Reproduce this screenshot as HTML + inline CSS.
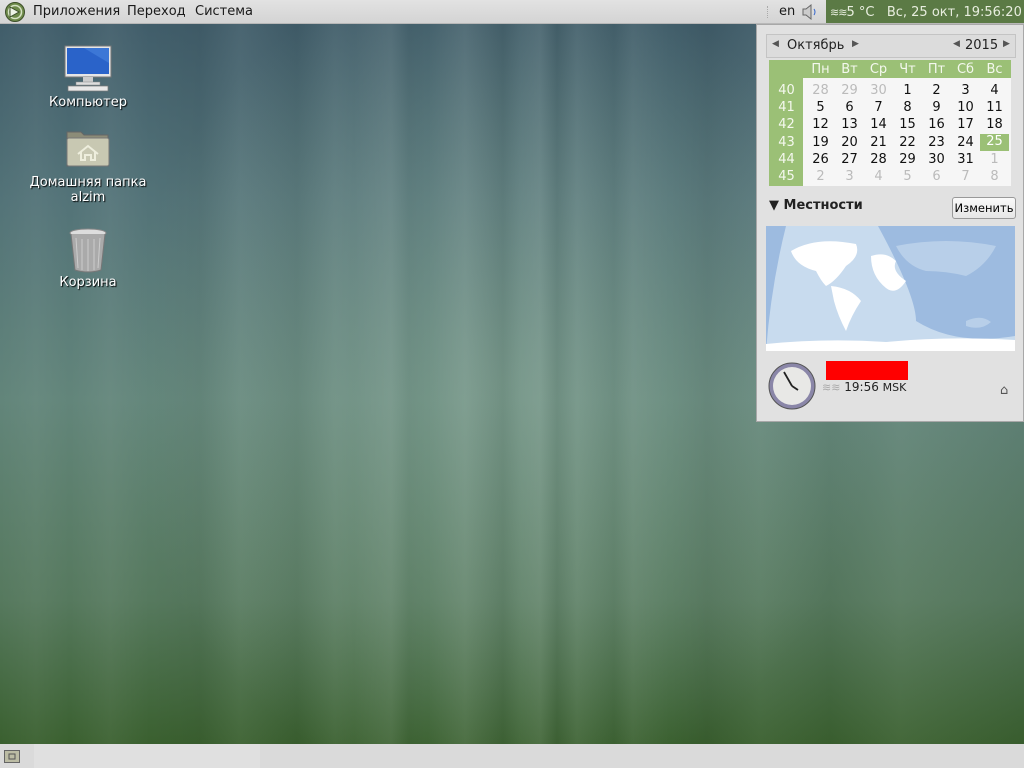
<!DOCTYPE html>
<html><head><meta charset="utf-8"><style>
*{margin:0;padding:0;box-sizing:border-box}
body{width:1024px;height:768px;overflow:hidden;position:relative;font-family:"DejaVu Sans","Liberation Sans",sans-serif;font-size:13px}
#bg{position:absolute;left:0;top:0;width:1024px;height:768px;
background:
linear-gradient(90deg,rgba(255,255,255,0) 0,rgba(255,255,255,.04) 36px,rgba(0,0,0,0) 70px,rgba(255,255,255,.05) 110px,rgba(255,255,255,0) 150px,rgba(0,0,0,.04) 200px,rgba(255,255,255,.05) 240px,rgba(0,0,0,.04) 297px,rgba(255,255,255,.05) 335px,rgba(255,255,255,.03) 354px,rgba(255,255,255,.08) 391px,rgba(0,0,0,.02) 409px,rgba(255,255,255,0) 428px,rgba(255,255,255,.08) 465px,rgba(0,0,0,.05) 503px,rgba(255,255,255,.04) 521px,rgba(255,255,255,.08) 540px,rgba(0,0,0,.05) 557px,rgba(255,255,255,.06) 577px,rgba(0,0,0,.03) 614px,rgba(255,255,255,.05) 633px,rgba(255,255,255,0) 670px,rgba(0,0,0,.05) 707px,rgba(255,255,255,.04) 760px,rgba(0,0,0,.03) 830px,rgba(255,255,255,.05) 900px,rgba(0,0,0,.04) 1024px),
radial-gradient(ellipse 380px 420px at 500px 380px,rgba(150,180,160,.4),rgba(150,180,160,0)),
linear-gradient(180deg,#3e5a68 0,#537378 200px,#62857a 400px,#56795e 600px,#3a602f 744px)}
#top{position:absolute;left:0;top:0;width:1024px;height:24px;background:linear-gradient(#e2e2e2,#d4d4d4);border-bottom:1px solid #b8b8b8}
#top .m{position:absolute;top:4px;color:#1a1a1a;font-size:13px}
#clk{position:absolute;left:826px;top:0;width:198px;height:23px;background:#5b7a45;color:#e8eedf;font-size:13px;padding:4px 0 0 4px;white-space:nowrap}
#bot{position:absolute;left:0;top:744px;width:1024px;height:24px;background:#dadada}
.ico{position:absolute;text-align:center;color:#fff;font-size:13px;text-shadow:1px 1px 1px #000;width:120px;line-height:15px}
#pop{position:absolute;left:756px;top:24px;width:268px;height:398px;background:#e1e1e1;border:1px solid #a8a8a8}
#calhdr{position:absolute;left:9px;top:9px;width:250px;height:24px;border:1px solid #c4c4c4;background:#dcdcdc;font-size:13px;color:#222}
#cal{position:absolute;left:12px;top:35px;width:242px;height:126px;background:#f6f6f6}
#cal div{position:absolute;text-align:center;width:29px;font-size:13px}
.wk{background:#9bc076;}
#map{position:absolute;left:9px;top:201px;width:249px;height:125px;background:#c8dbee;overflow:hidden}
</style></head><body>
<div id="bg"></div>
<div id="top">
<svg style="position:absolute;left:4px;top:1px" width="22" height="22" viewBox="0 0 22 22"><circle cx="11" cy="11" r="9.5" fill="#6e8a4a" stroke="#3d4f2a"/><circle cx="11" cy="11" r="6.5" fill="none" stroke="#d6e2c4" stroke-width="1.5"/><path d="M6 6 L15 11 L6 16Z" fill="#eef3e6" stroke="#3d4f2a"/></svg>
<span class="m" style="left:33px">Приложения</span><span class="m" style="left:127px">Переход</span><span class="m" style="left:195px">Система</span>
<span style="position:absolute;left:767px;top:6px;width:2px;height:12px;border-left:1px dotted #aaa"></span>
<span class="m" style="left:779px">en</span>
<svg style="position:absolute;left:801px;top:4px" width="18" height="16" viewBox="0 0 18 16"><path d="M2 5h3l5-4v14l-5-4H2z" fill="#ccc" stroke="#666"/><path d="M13 5q2 3 0 6" fill="none" stroke="#36c"/></svg>
</div>
<div id="clk" style="padding-top:5px"><span style="font-size:11px;letter-spacing:-1px">≋≋</span>5 °C &nbsp; Вс, 25 окт, 19:56:20</div>

<div class="ico" style="left:28px;top:95px">Компьютер</div>
<svg style="position:absolute;left:64px;top:45px" width="48" height="48" viewBox="0 0 48 48"><rect x="1" y="1" width="46" height="31" fill="#e6e6e6" stroke="#777"/><rect x="3" y="3" width="42" height="26" fill="#2a63c9"/><path d="M20 3 L45 3 L45 18Z" fill="#4a86e0" opacity=".6"/><rect x="19" y="32" width="10" height="5" fill="#ccc"/><rect x="12" y="37" width="24" height="3" fill="#ddd" stroke="#888" stroke-width=".5"/><rect x="4" y="41" width="40" height="5" fill="#e8e8e8" stroke="#777" stroke-width=".7"/></svg>
<div class="ico" style="left:28px;top:175px">Домашняя папка<br>alzim</div>
<svg style="position:absolute;left:66px;top:128px" width="44" height="40" viewBox="0 0 44 40"><path d="M1 4h14l3 3h24v31H1z" fill="#8c8c78" stroke="#666"/><rect x="1" y="10" width="42" height="28" rx="2" fill="#c8c8b2" stroke="#777"/><path d="M12 26 L22 18 L32 26 M15 24v8h4v-5h6v5h4v-8" fill="none" stroke="#eeeedd" stroke-width="2"/></svg>
<div class="ico" style="left:28px;top:275px">Корзина</div>
<svg style="position:absolute;left:68px;top:228px" width="40" height="46" viewBox="0 0 40 46"><ellipse cx="20" cy="5" rx="18" ry="4" fill="#ddd" stroke="#888"/><path d="M3 6 L7 42 Q20 46 33 42 L37 6" fill="#aaa" stroke="#777"/><path d="M8 10 L10 40 M14 11v31 M20 11v32 M26 11v31 M32 10 L30 40" stroke="#ccc"/></svg>

<div id="pop">
<div id="calhdr"><span style="position:absolute;left:5px;top:4px;font-size:9px;color:#555">◀</span><span style="position:absolute;left:20px;top:3px">Октябрь</span><span style="position:absolute;left:85px;top:4px;font-size:9px;color:#555">▶</span><span style="position:absolute;left:186px;top:4px;font-size:9px;color:#555">◀</span><span style="position:absolute;left:198px;top:3px">2015</span><span style="position:absolute;left:236px;top:4px;font-size:9px;color:#555">▶</span></div>
<div id="cal">
<div class="wk" style="left:0;top:0;width:242px;height:18px"></div>
<div class="wk" style="left:0;top:0;width:34px;height:126px"></div>
</div>
<div id="map"><svg width="249" height="125" viewBox="0 0 249 125"><path d="M20 0 Q5 60 0 125 L0 0Z M112 0 Q150 70 150 95 Q190 120 249 110 L249 0Z" fill="#9dbbe0"/><path d="M25 25 Q50 10 90 18 Q95 30 80 40 Q70 55 60 60 Q55 55 50 45 Q30 40 25 25Z M65 60 Q85 62 95 75 Q85 90 80 105 Q72 90 68 75Z M105 30 Q120 25 130 35 Q125 45 140 55 Q130 70 120 62 Q105 50 105 30Z M0 118 Q60 112 120 116 Q180 110 249 114 L249 125 L0 125Z" fill="#fff"/><path d="M130 20 Q180 10 230 20 Q220 40 200 50 Q180 45 160 45 Q140 40 130 20Z M200 95 Q215 88 225 96 Q215 105 200 100Z" fill="#b8cfe9"/></svg></div>
<div style="position:absolute;left:12px;top:173px;font-weight:bold;font-size:13px;color:#222">▼ Местности</div>
<div style="position:absolute;left:195px;top:172px;width:64px;height:22px;border:1px solid #999;border-radius:3px;background:linear-gradient(#fafafa,#e6e6e6);font-size:11.5px;text-align:center;line-height:20px">Изменить</div>
<svg style="position:absolute;left:10px;top:336px" width="50" height="50" viewBox="0 0 50 50"><circle cx="25" cy="25" r="23" fill="#8a86a8" stroke="#555"/><circle cx="25" cy="25" r="19" fill="#e8e8e6"/><path d="M25 25 L17 11 M25 25 L31 29" stroke="#222" stroke-width="1.8"/></svg>
<div style="position:absolute;left:69px;top:336px;width:82px;height:19px;background:#f00"></div>
<div style="position:absolute;left:65px;top:355px;font-size:12px;color:#222"><span style="color:#aaa;font-size:11px">≋≋</span> 19:56 <span style="font-size:11px">MSK</span></div>
<div style="position:absolute;left:243px;top:358px;font-size:13px;color:#555">⌂</div>
</div>

<div id="bot"><svg style="position:absolute;left:4px;top:5px" width="16" height="14" viewBox="0 0 16 14"><rect x=".5" y="1.5" width="15" height="12" fill="#bcbca4" stroke="#666"/><rect x="5" y="5" width="6" height="5" fill="none" stroke="#555"/></svg>
<div style="position:absolute;left:34px;top:0;width:226px;height:24px;background:#e0e0e0"></div></div>

<script>
var c=document.getElementById('cal');
function d(x,y,t,col,bg){var e=document.createElement('div');e.textContent=t;e.style.left=x+'px';e.style.top=y+'px';e.style.color=col;if(bg){e.style.background=bg;e.style.height='17px'}c.appendChild(e);}
var h=['Пн','Вт','Ср','Чт','Пт','Сб','Вс'];
for(var i=0;i<7;i++)d(37+i*29,2,h[i],'#f4f8ee');
var rows=[[28,29,30,1,2,3,4],[5,6,7,8,9,10,11],[12,13,14,15,16,17,18],[19,20,21,22,23,24,25],[26,27,28,29,30,31,1],[2,3,4,5,6,7,8]];
for(var r=0;r<6;r++){d(3,23+r*17.2,40+r,'#f4f8ee');for(var i=0;i<7;i++){var v=rows[r][i];var g=(r==0&&i<3)||(r==4&&i==6)||r==5;var t=(r==3&&i==6);d(37+i*29,23+r*17.2-(t?1:0),v,t?'#fff':(g?'#bbb':'#111'),t?'#9bc076':null);}}
</script>
</body></html>
